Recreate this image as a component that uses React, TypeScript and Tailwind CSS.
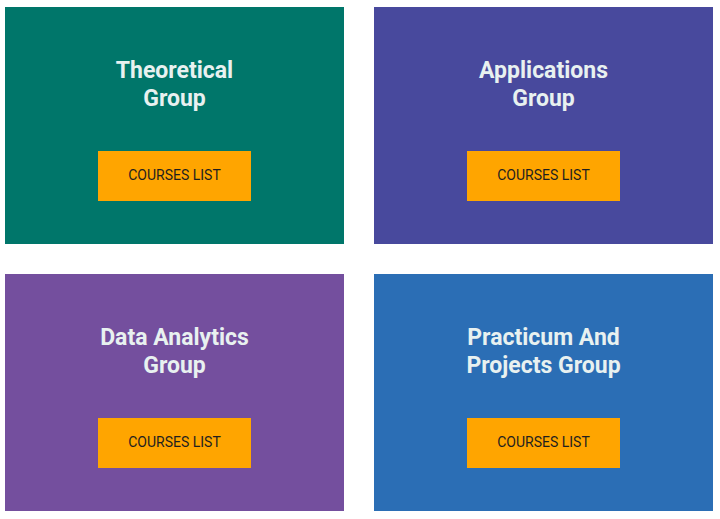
const groups = [
  { title: ['Theoretical', 'Group'], bg: 'bg-[#00766a]' },
  { title: ['Applications', 'Group'], bg: 'bg-[#48499d]' },
  { title: ['Data Analytics', 'Group'], bg: 'bg-[#744f9e]' },
  { title: ['Practicum And', 'Projects Group'], bg: 'bg-[#2b6eb5]' },
];

const GroupCard = ({ title, bg }: { title: string[]; bg: string }) => (
  <div className={`${bg} h-[237px] flex flex-col items-center pt-[50px]`}>
    <h2 className="text-[23px] leading-[28px] font-bold text-[#e8f1f0] text-center">
      {title[0]}
      <br />
      {title[1]}
    </h2>
    <button className="mt-[38px] w-[153px] h-[50px] pb-px bg-[#ffa500] text-[14px] text-[#1f1f1f] uppercase">
      Courses List
    </button>
  </div>
);

export default function App() {
  return (
    <div className="min-h-screen bg-white pl-[5px] pt-[7px]" style={{ fontFamily: 'Roboto, "Liberation Sans", sans-serif' }}>
      <div className="grid grid-cols-[339px_339px] gap-x-[30px] gap-y-[30px]">
        {groups.map((g) => (
          <GroupCard key={g.title.join(' ')} title={g.title} bg={g.bg} />
        ))}
      </div>
    </div>
  );
}
